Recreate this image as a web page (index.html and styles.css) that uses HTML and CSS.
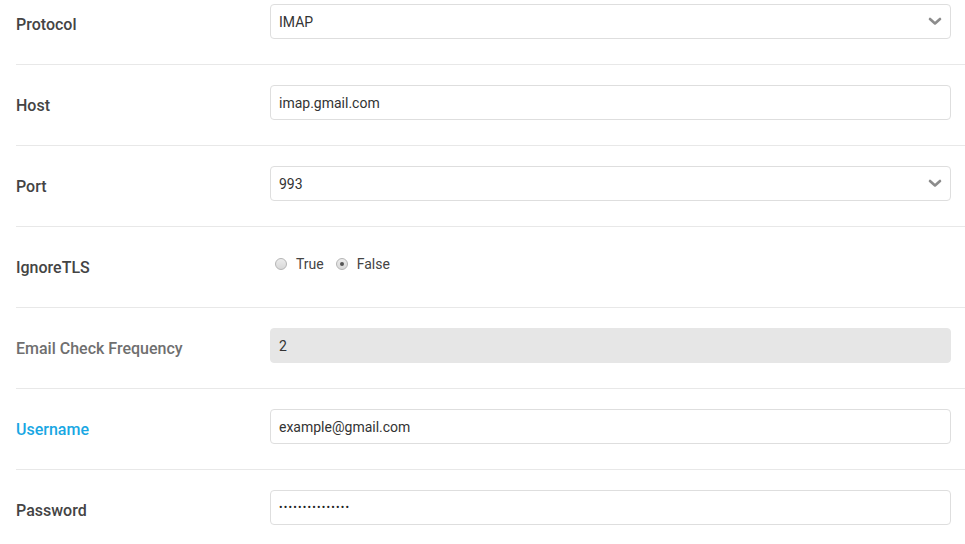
FILE: index.html
```html
<!DOCTYPE html>
<html>
<head>
<meta charset="utf-8">
<link rel="stylesheet" href="styles.css">
</head>
<body>
<div class="form">
  <div class="row">
    <div class="label">Protocol</div>
    <div class="control">
      <div class="field select">
        <span>IMAP</span>
        <svg class="chev" width="14" height="9" viewBox="0 0 14 9"><path d="M2 2 L7 6.5 L12 2" fill="none" stroke="#8c8c8c" stroke-width="2.6" stroke-linecap="round" stroke-linejoin="round"/></svg>
      </div>
    </div>
  </div>
  <div class="row">
    <div class="label">Host</div>
    <div class="control"><div class="field">imap.gmail.com</div></div>
  </div>
  <div class="row">
    <div class="label">Port</div>
    <div class="control">
      <div class="field select">
        <span>993</span>
        <svg class="chev" width="14" height="9" viewBox="0 0 14 9"><path d="M2 2 L7 6.5 L12 2" fill="none" stroke="#8c8c8c" stroke-width="2.6" stroke-linecap="round" stroke-linejoin="round"/></svg>
      </div>
    </div>
  </div>
  <div class="row">
    <div class="label">IgnoreTLS</div>
    <div class="control">
      <div class="radios">
        <label class="radio"><span class="dot"></span>True</label>
        <label class="radio"><span class="dot checked"></span>False</label>
      </div>
    </div>
  </div>
  <div class="row">
    <div class="label disabled">Email Check Frequency</div>
    <div class="control"><div class="field readonly">2</div></div>
  </div>
  <div class="row">
    <div class="label active">Username</div>
    <div class="control"><div class="field">example@gmail.com</div></div>
  </div>
  <div class="row">
    <div class="label">Password</div>
    <div class="control"><div class="field pw">•••••••••••••••</div></div>
  </div>
</div>
</body>
</html>
```
FILE: styles.css
```css
html, body {
  margin: 0;
  padding: 0;
  background: #fff;
  font-family: Roboto, "Liberation Sans", sans-serif;
  overflow: hidden;
}
.form {
  margin-top: -16px;
  padding-left: 16px;
}
.row {
  display: flex;
  height: 80px;
  border-bottom: 1px solid #e8e8e8;
}
.label {
  width: 254px;
  flex: none;
  display: flex;
  align-items: center;
  font-size: 16px;
  font-weight: 500;
  color: #444;
}
.label.disabled { color: #6f6f6f; }
.label.active { color: #19a7e3; }
.control {
  flex: 1;
  padding: 20px 14px 0 0;
}
.field {
  box-sizing: border-box;
  height: 35px;
  border: 1px solid #dedede;
  border-radius: 4px;
  padding: 0 8px;
  display: flex;
  align-items: center;
  font-size: 14px;
  color: #333;
}
.field.select { justify-content: space-between; }
.chev { margin-right: 0; }
.field.readonly {
  background: #e6e6e6;
  border-color: #e6e6e6;
}
.field.pw {
  font-size: 10.5px;
  letter-spacing: 1.2px;
  color: #222;
}
.radios {
  display: flex;
  align-items: center;
  height: 24px;
  padding-left: 5px;
  margin-top: 5px;
  font-size: 14px;
  color: #444;
}
.radio {
  display: flex;
  align-items: center;
  margin-right: 12px;
}
.dot {
  box-sizing: border-box;
  width: 12px;
  height: 12px;
  border-radius: 50%;
  border: 1px solid #b5b5b5;
  background: linear-gradient(#ececec, #d8d8d8);
  margin-right: 9px;
  position: relative;
}
.dot.checked::after {
  content: "";
  position: absolute;
  left: 3px;
  top: 3px;
  width: 4px;
  height: 4px;
  border-radius: 50%;
  background: #555;
}
```
